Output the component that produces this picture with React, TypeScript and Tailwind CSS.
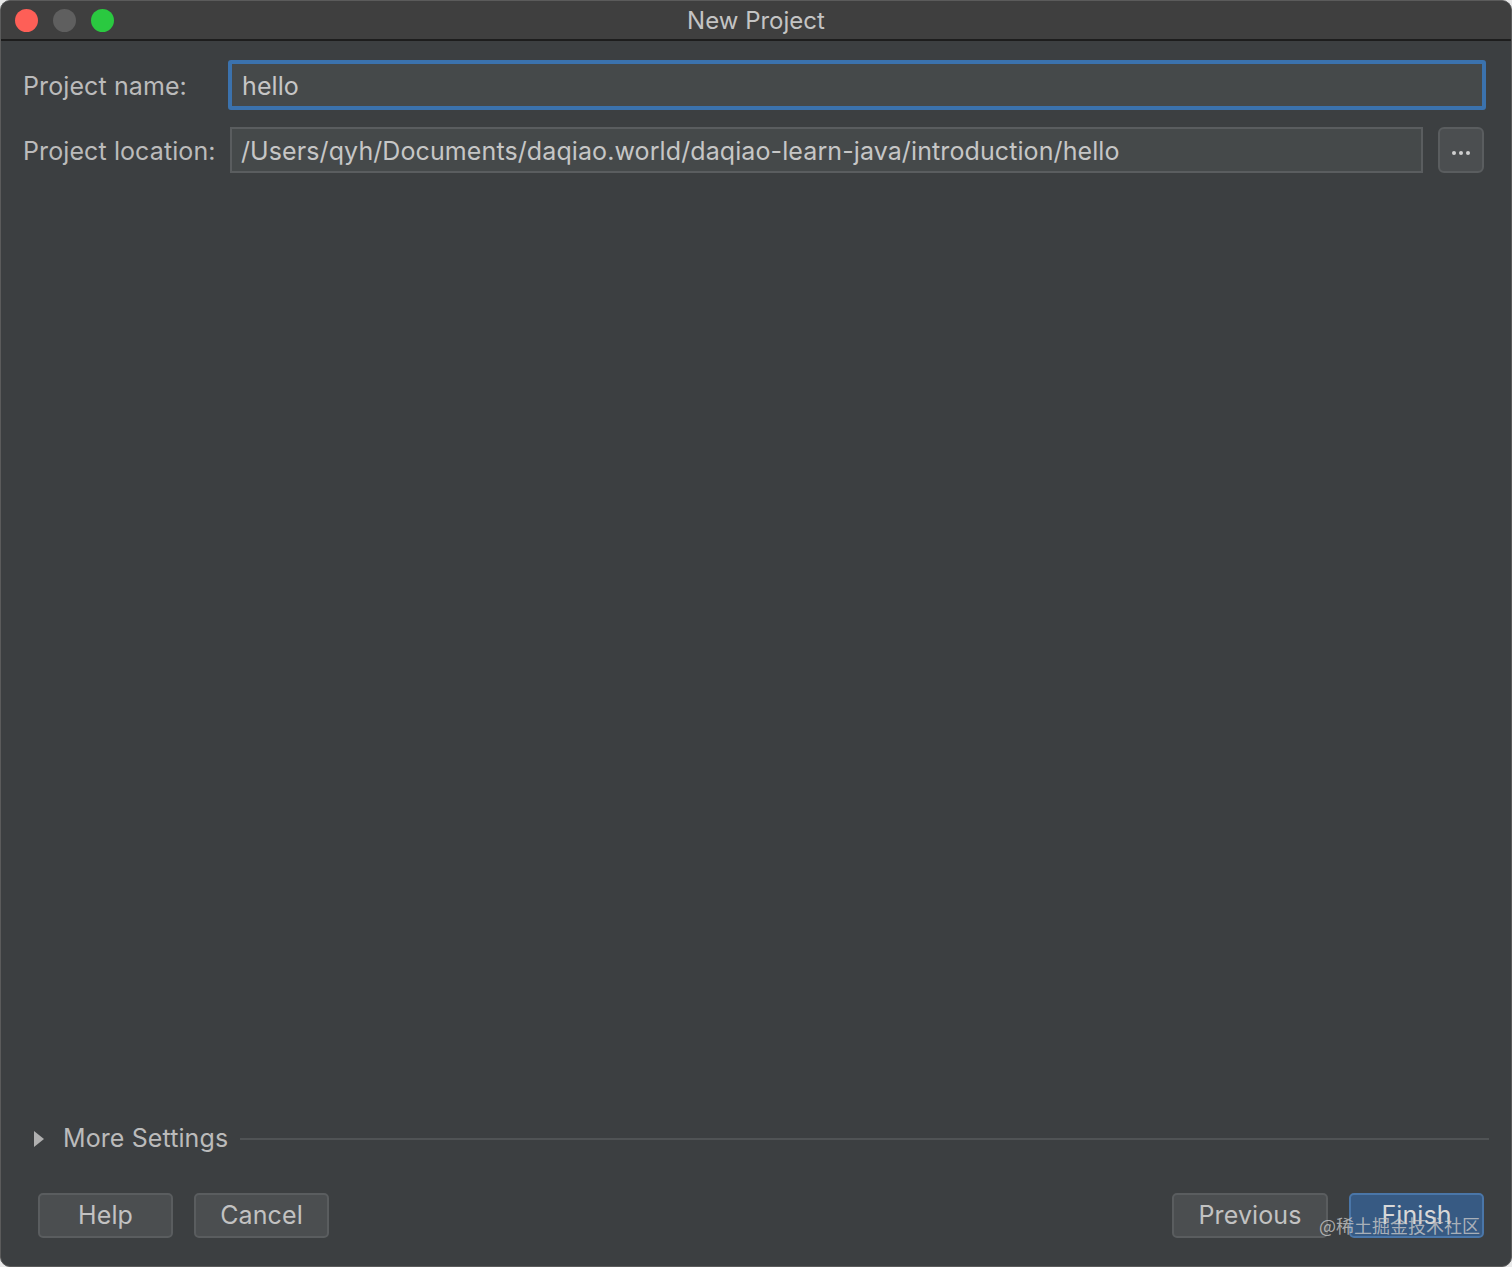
export default function App() {
  return (
    <div className="w-[1512px] h-[1267px] bg-[#e8e8e8]" style={{ fontFamily: "Inter, 'Noto Sans', 'Noto Sans CJK SC', sans-serif" }}>
      <div className="w-full h-full flex flex-col rounded-[10px] overflow-hidden border border-[#5b5b5b] bg-[#3c3f41] text-[#bbbbbb]">
        {/* title bar */}
        <div className="relative h-[40px] shrink-0 flex items-center justify-center bg-[#3f3f3f] border-b-2 border-[#1d1d1d]">
          <div className="absolute left-[14px] top-[8px] flex gap-[15px]">
            <span className="w-[23px] h-[23px] rounded-full bg-[#fe5f57]" />
            <span className="w-[23px] h-[23px] rounded-full bg-[#5f5f5f]" />
            <span className="w-[23px] h-[23px] rounded-full bg-[#2ac940]" />
          </div>
          <span className="text-[24px] text-[#c4c4c4] mt-[2px]">New Project</span>
        </div>

        {/* form */}
        <div className="flex-1 flex flex-col px-[22px] pt-[18px] text-[25px] tracking-[0.1px]">
          <div className="flex items-center h-[52px]">
            <div className="w-[205px] pt-[3px]">Project name:</div>
            <div className="flex-1 h-[50px] mr-[3px] rounded-[3px] border-[4px] border-[#3b72ad] bg-[#45494a] flex items-center px-[10px] pt-[3px] text-[#c6c6c6]">
              hello
            </div>
          </div>
          <div className="flex items-center h-[46px] mt-[16px]">
            <div className="w-[207px] pt-[4px]">Project location:</div>
            <div className="flex-1 h-[46px] border-[2px] border-[#5a5d5f] bg-[#45494a] flex items-center px-[9px] pt-[4px] text-[#c6c6c6]">
              /Users/qyh/Documents/daqiao.world/daqiao-learn-java/introduction/hello
            </div>
            <div className="w-[46px] h-[46px] ml-[15px] mr-[5px] rounded-[6px] border-[2px] border-[#5a5d5f] bg-[#4b4e50] flex items-center justify-center gap-[3px] pt-[6px]">
              <span className="w-[4px] h-[4px] rounded-full bg-[#cfcfcf]" />
              <span className="w-[4px] h-[4px] rounded-full bg-[#cfcfcf]" />
              <span className="w-[4px] h-[4px] rounded-full bg-[#cfcfcf]" />
            </div>
          </div>

          <div className="flex-1" />

          {/* more settings */}
          <div className="flex items-center h-[30px] ml-[11px]">
            <svg width="10" height="16" viewBox="0 0 10 16" className="mr-[19px]">
              <path d="M0 0 L10 8 L0 16 Z" fill="#b0b0b0" />
            </svg>
            <span>More Settings</span>
            <div className="flex-1 h-[2px] bg-[#505355] ml-[12px]" />
          </div>

          {/* buttons */}
          <div className="flex items-center mt-[39px] mb-[28px] pl-[15px] pr-[5px]">
            <button className="w-[135px] h-[45px] rounded-[5px] border-[2px] border-[#5a5d5f] bg-[#4b4e50] text-[#c2c2c2]">Help</button>
            <button className="w-[135px] h-[45px] ml-[21px] rounded-[5px] border-[2px] border-[#5a5d5f] bg-[#4b4e50] text-[#c2c2c2]">Cancel</button>
            <div className="flex-1" />
            <button className="w-[156px] h-[45px] rounded-[5px] border-[2px] border-[#5a5d5f] bg-[#4b4e50] text-[#c2c2c2]">Previous</button>
            <div className="relative ml-[21px]">
              <button className="w-[135px] h-[45px] rounded-[5px] border-[2px] border-[#4a76a8] bg-[#375a83] text-[#d8d8d8]">Finish</button>
              <span className="absolute left-[-30px] top-[19px] whitespace-nowrap text-[18px] tracking-normal text-[#c8c8c8]/80" style={{ fontFamily: "'Noto Sans CJK SC', sans-serif" }}>@稀土掘金技术社区</span>
            </div>
          </div>
        </div>
      </div>
    </div>
  );
}
